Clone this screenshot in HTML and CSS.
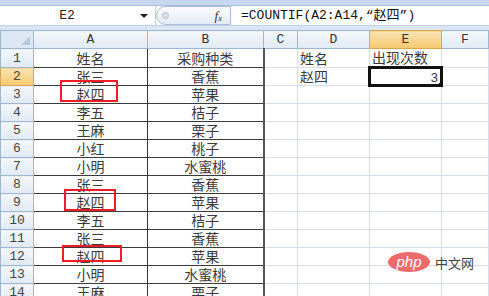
FILE: index.html
```html
<html>
<head>
<link rel="stylesheet" href="styles.css">
<title>COUNTIF</title>
</head>
<body>
  <div class="topband"></div>
  <div class="formula-bar">
    <div class="name-box"><span class="name">E2</span><span class="arrow"></span></div>
    <div class="fx-pill"><span class="knob"></span><span class="fx">f<sub>x</sub></span></div>
    <div class="formula">=COUNTIF(A2:A14,“赵四”)</div>
  </div>
  <div class="gap"></div>
  <div class="sheet-wrap">
    <table class="sheet">
      <colgroup>
        <col style="width:33px"><col style="width:114px"><col style="width:116px">
        <col style="width:34px"><col style="width:72px"><col style="width:72px"><col>
      </colgroup>
      <tr class="heads">
        <th class="corner"><span class="tri"></span></th>
        <th>A</th><th>B</th><th>C</th><th>D</th><th class="sel">E</th><th>F</th>
      </tr>
      <tr><th>1</th><td class="a">姓名</td><td class="b">采购种类</td><td></td><td class="d">姓名</td><td class="d">出现次数</td><td></td></tr>
      <tr><th class="sel">2</th><td class="a">张三</td><td class="b">香蕉</td><td></td><td class="d">赵四</td><td class="active">3<span class="handle"></span></td><td></td></tr>
      <tr><th>3</th><td class="a">赵四</td><td class="b">苹果</td><td></td><td></td><td></td><td></td></tr>
      <tr><th>4</th><td class="a">李五</td><td class="b">桔子</td><td></td><td></td><td></td><td></td></tr>
      <tr><th>5</th><td class="a">王麻</td><td class="b">栗子</td><td></td><td></td><td></td><td></td></tr>
      <tr><th>6</th><td class="a">小红</td><td class="b">桃子</td><td></td><td></td><td></td><td></td></tr>
      <tr><th>7</th><td class="a">小明</td><td class="b">水蜜桃</td><td></td><td></td><td></td><td></td></tr>
      <tr><th>8</th><td class="a">张三</td><td class="b">香蕉</td><td></td><td></td><td></td><td></td></tr>
      <tr><th>9</th><td class="a">赵四</td><td class="b">苹果</td><td></td><td></td><td></td><td></td></tr>
      <tr><th>10</th><td class="a">李五</td><td class="b">桔子</td><td></td><td></td><td></td><td></td></tr>
      <tr><th>11</th><td class="a">张三</td><td class="b">香蕉</td><td></td><td></td><td></td><td></td></tr>
      <tr><th>12</th><td class="a">赵四</td><td class="b">苹果</td><td></td><td></td><td></td><td></td></tr>
      <tr><th>13</th><td class="a">小明</td><td class="b">水蜜桃</td><td></td><td></td><td></td><td></td></tr>
      <tr><th>14</th><td class="a">王麻</td><td class="b">栗子</td><td></td><td></td><td></td><td></td></tr>
    </table>

    <!-- red marks over the sheet -->
    <div class="mark m1"></div>
    <div class="mark m2"></div>
    <div class="mark m3"></div>

    <div class="watermark"><span class="php">php</span><span class="cn">中文网</span></div>
  </div>
</body>
</html>
```

FILE: styles.css
```css
* {
  margin: 0;
  padding: 0;
  box-sizing: border-box;
}

body {
  font-family: "Noto Sans CJK SC", sans-serif;
  background: #fff;
  width: 489px;
  height: 296px;
  overflow: hidden;
}

.topband {
  height: 6px;
  background: #c6d7ee;
  border-bottom: 1px solid #a9c0dd;
}

.formula-bar {
  display: flex;
  height: 19px;
  background: #fff;
}

.name-box {
  width: 156px;
  display: flex;
  align-items: center;
  border-right: 1px solid #c2d1e6;
}

.name-box .name {
  flex: 1;
  text-align: center;
  font-family: "Liberation Mono", monospace;
  font-size: 13px;
  color: #222;
  padding-right: 6px;
}

.name-box .arrow {
  width: 0;
  height: 0;
  border-left: 4px solid transparent;
  border-right: 4px solid transparent;
  border-top: 4px solid #222;
  margin-right: 7px;
}

.fx-pill {
  width: 75px;
  position: relative;
  border: 1px solid #a9bdd8;
  border-radius: 10px 0 0 10px;
  background: linear-gradient(#fbfcfe, #e4ebf5);
  display: flex;
  align-items: center;
  justify-content: flex-end;
  padding-right: 8px;
}

.fx-pill .knob {
  position: absolute;
  left: 5px;
  top: 5px;
  width: 7px;
  height: 7px;
  border-radius: 50%;
  background: radial-gradient(#e9eef5, #a8b3c2);
}

.fx-pill .fx {
  font-family: "Liberation Serif", serif;
  font-style: italic;
  font-size: 13px;
  color: #333;
  line-height: 1;
}

.fx-pill .fx sub {
  font-size: 9px;
  vertical-align: -1px;
}

.formula {
  flex: 1;
  padding-left: 10px;
  font-family: "Liberation Mono", "Noto Sans CJK SC", monospace;
  font-size: 13px;
  line-height: 19px;
  color: #111;
}

.gap {
  height: 5px;
  background: #dbe6f4;
  border-top: 1px solid #c2d1e6;
}

.sheet-wrap {
  position: relative;
}

.sheet {
  border-collapse: collapse;
  table-layout: fixed;
  width: 489px;
}

.sheet th,
.sheet td {
  height: 18px;
  padding: 0;
  border: 1px solid #d6dce9;
  font-size: 14px;
  line-height: 17px;
  font-weight: normal;
  white-space: nowrap;
  overflow: hidden;
  vertical-align: bottom;
  color: #3a3a3a;
}

.sheet th {
  background: linear-gradient(#f4f7fb, #e1e9f4);
  border-color: #9eb6ce;
  font-family: "Liberation Mono", monospace;
  font-size: 13px;
  color: #444;
  text-align: center;
  vertical-align: middle;
}

.heads th {
  height: 17px;
  color: #333;
}

.sheet th.corner {
  position: relative;
  background: #dde7f4;
}

.corner .tri {
  position: absolute;
  right: 3px;
  bottom: 3px;
  width: 0;
  height: 0;
  border-left: 9px solid transparent;
  border-bottom: 9px solid #b8c9de;
}

.sheet th.sel {
  background: linear-gradient(#fbe3b4, #f5c96f);
  border-color: #d9a84c;
}

.sheet td.a,
.sheet td.b {
  text-align: center;
  border-color: #3a3a3a;
}

.sheet td.b {
  border-right: 2px solid #555;
}

.sheet td.d {
  padding-left: 2px;
}

.sheet td.active {
  position: relative;
  border: 3px solid #111;
  text-align: right;
  padding-right: 2px;
  font-family: "Liberation Sans", sans-serif;
  font-size: 13px;
  line-height: 12px;
}

.active .handle {
  position: absolute;
  right: -4px;
  bottom: -4px;
  width: 6px;
  height: 6px;
  background: #111;
  border: 1px solid #fff;
}

.mark {
  position: absolute;
  border: 2px solid #ee1c24;
}

.m1 {
  left: 60px;
  top: 50px;
  width: 58px;
  height: 22px;
}

.m2 {
  left: 64px;
  top: 159px;
  width: 52px;
  height: 22px;
}

.m3 {
  left: 62px;
  top: 215px;
  width: 60px;
  height: 17px;
}

.watermark {
  position: absolute;
  left: 388px;
  top: 222px;
  display: flex;
  align-items: center;
  gap: 5px;
}

.watermark .php {
  background: #ec6b6b;
  color: #fff;
  font-family: "Liberation Sans", sans-serif;
  font-style: italic;
  font-size: 15px;
  line-height: 20px;
  width: 42px;
  text-align: center;
  border-radius: 50%;
}

.watermark .cn {
  font-size: 13px;
  color: #444;
}
```
